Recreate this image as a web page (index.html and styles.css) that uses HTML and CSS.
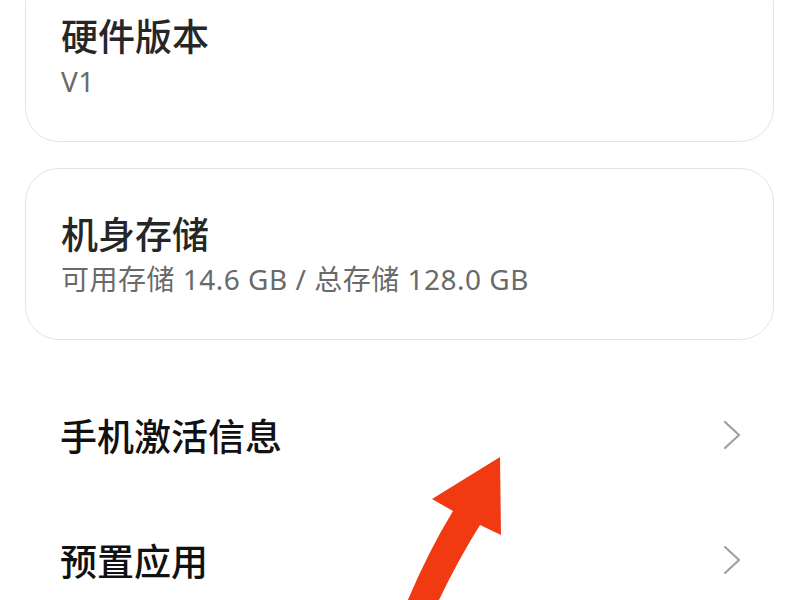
FILE: index.html
```html
<!DOCTYPE html>
<html lang="zh">
<head>
<meta charset="utf-8">
<link rel="stylesheet" href="styles.css">
</head>
<body>
<div class="page">
  <div class="card card-first">
    <div class="title">硬件版本</div>
    <div class="sub">V1</div>
  </div>
  <div class="card">
    <div class="title">机身存储</div>
    <div class="sub">可用存储 14.6 GB / 总存储 128.0 GB</div>
  </div>
  <div class="row row-first">
    <div class="row-title">手机激活信息</div>
    <svg class="chev" width="20" height="32" viewBox="0 0 20 32"><path d="M3 3 L17 16 L3 29" fill="none" stroke="#a0a0a0" stroke-width="2.2" stroke-linecap="round" stroke-linejoin="round"/></svg>
  </div>
  <div class="row">
    <div class="row-title">预置应用</div>
    <svg class="chev" width="20" height="32" viewBox="0 0 20 32"><path d="M3 3 L17 16 L3 29" fill="none" stroke="#a0a0a0" stroke-width="2.2" stroke-linecap="round" stroke-linejoin="round"/></svg>
  </div>
  <svg class="arrow" width="800" height="600" viewBox="0 0 800 600">
    <path d="M500 457 L501 535 L480 525 Q458 560 438 602 L407 602 Q428 552 453 511 L432 499 Z" fill="#f23a12"/>
  </svg>
</div>
</body>
</html>
```

FILE: styles.css
```css
html, body {
  margin: 0;
  padding: 0;
  background: #ffffff;
}
body {
  width: 800px;
  height: 600px;
  overflow: hidden;
  font-family: "Noto Sans", "Noto Sans CJK SC", sans-serif;
}
.page {
  position: relative;
  width: 800px;
  height: 600px;
  padding: 0 26px 0 25px;
  box-sizing: border-box;
  display: flex;
  flex-direction: column;
}
.card {
  box-sizing: border-box;
  height: 172px;
  flex: 0 0 172px;
  border: 1.5px solid #e4e4e4;
  border-radius: 34px;
  padding: 0 35px;
  display: flex;
  flex-direction: column;
  justify-content: center;
  gap: 0;
  margin-top: 26px;
}
.card-first {
  margin-top: -30px;
}
.title {
  font-size: 37px;
  line-height: 50px;
  color: #262626;
  font-weight: 500;
}
.sub {
  font-size: 28px;
  line-height: 38px;
  letter-spacing: 0.5px;
  color: #6a6a6a;
}
.row {
  height: 125px;
  flex: 0 0 125px;
  display: flex;
  align-items: center;
  justify-content: space-between;
  padding: 0 32px 0 35px;
}
.row-first {
  margin-top: 32px;
}
.row-title {
  font-size: 37px;
  color: #111111;
  font-weight: 500;
}
.chev {
  display: block;
}
.arrow {
  position: absolute;
  left: 0;
  top: 0;
  pointer-events: none;
}
```
